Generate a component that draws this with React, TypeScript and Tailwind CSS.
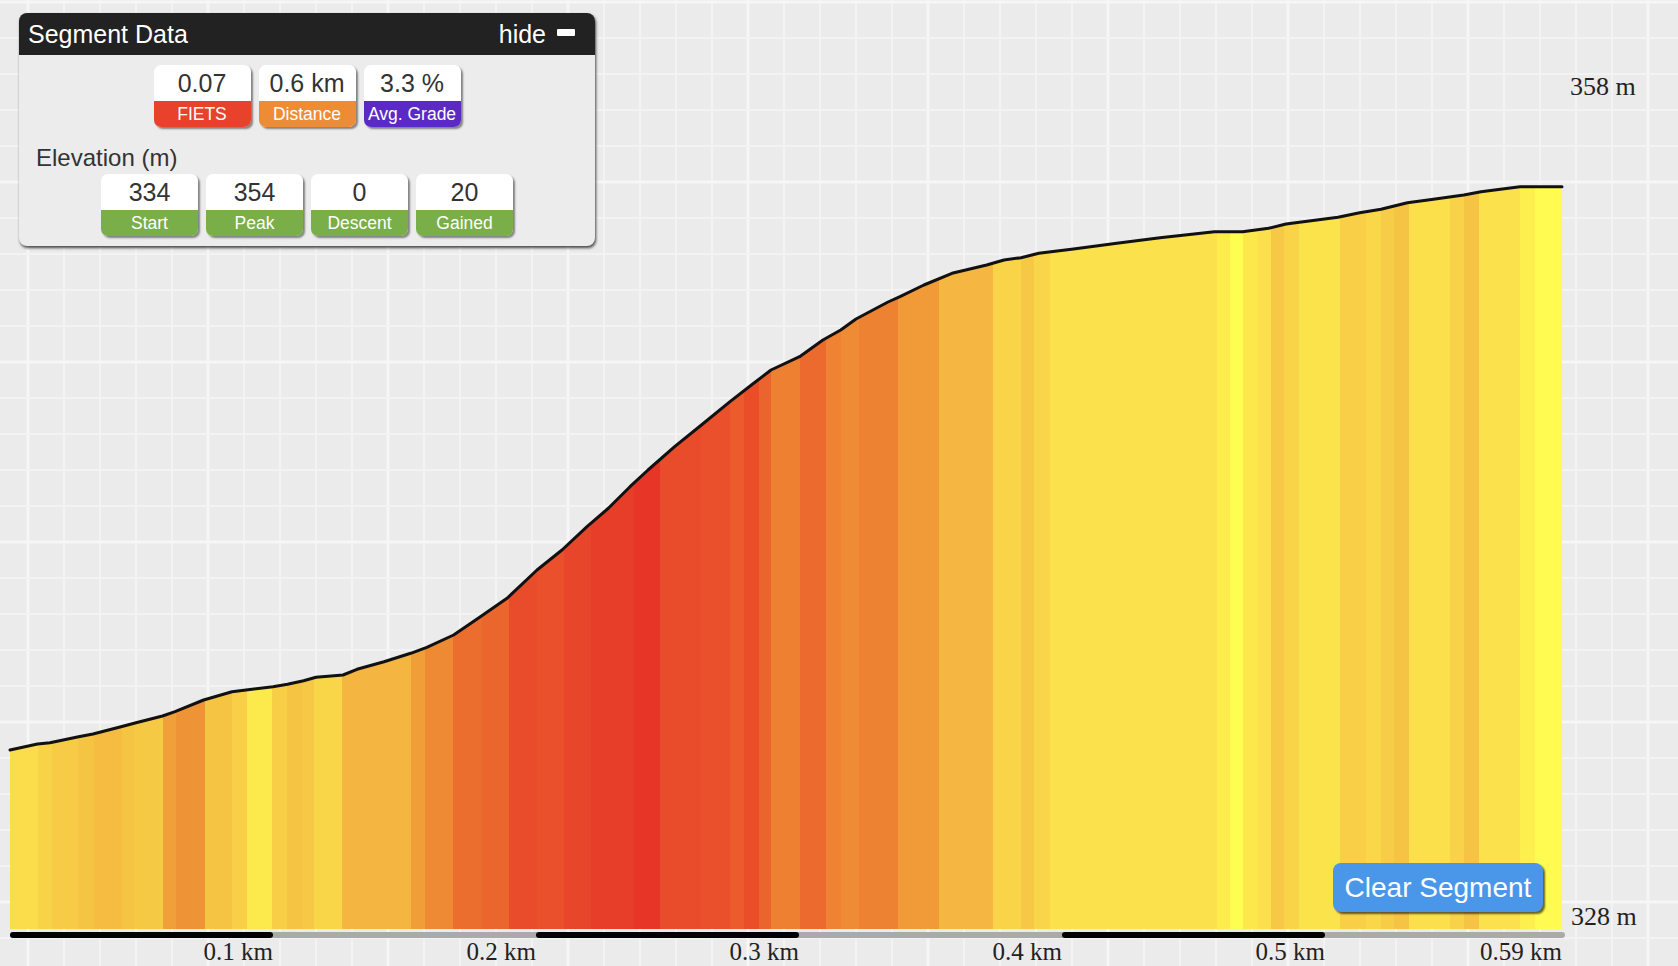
import React from "react";

type Stat = { value: string; label: string; color: string };

const W = 1678;
const H = 966;
const LEFT = 10;
const RIGHT = 1562;
const BASE = 929;

// elevation profile traced in screen px
const profile: [number, number][] = [
  [10, 750], [37.5, 744], [50, 742.7], [78.6, 736.7], [93, 734], [121, 726.7], [136, 722.7],
  [162.5, 716], [175, 711.7], [203.6, 700], [232, 691.7], [246, 690], [273, 686.7], [287.5, 684.3],
  [303.6, 680.7], [316, 677.3], [343, 675], [357, 669.3], [384, 661.7], [410.7, 653.3], [426.8, 647.3],
  [453.6, 635], [480, 617], [507, 598.3], [537, 570], [562, 550], [587, 526.7], [608.6, 508],
  [630, 486.7], [648, 470], [674.6, 446.7], [701.4, 425], [730, 401.7], [751.4, 385], [771, 370],
  [799.6, 356.7], [822.9, 340], [840.7, 330], [856, 319], [888, 302], [900, 296.7], [923.9, 285],
  [952, 273.3], [986.7, 265], [1004, 260], [1021, 257.7], [1038.8, 253.3], [1073.5, 249],
  [1116.8, 243.3], [1160, 237.7], [1214.4, 231.7], [1242.6, 231.7], [1268.6, 228.3], [1286, 224],
  [1338, 217.3], [1359.7, 212.7], [1381, 209.3], [1407.4, 202.7], [1433.4, 199.3], [1463.8, 195],
  [1481, 191.7], [1520, 186.7], [1562, 186.7],
];

// grade colour bands: start x, colour
const bands: [number, string][] = [
  [10, "#fbdc4a"], [38, "#f8d247"], [52, "#f7cb45"], [78, "#f6c443"], [94, "#f5bc41"], [122, "#f6c443"],
  [134, "#f6c944"], [163, "#f19f38"], [176, "#ef9436"], [205, "#f6c443"], [232, "#f8cf46"], [247, "#fce94c"],
  [272, "#f8ce46"], [287, "#f6c443"], [302, "#f7c845"], [314, "#f9d648"], [342, "#f4b640"], [411, "#f09e38"],
  [425, "#ed8a33"], [453, "#eb6e2e"], [482, "#ea662d"], [509, "#e84c2a"], [537, "#e9502b"], [564, "#e8462a"],
  [591, "#e73e29"], [634, "#e73628"], [660, "#e94c2a"], [701, "#ea502b"], [730, "#eb5b2c"], [744, "#ea4e29"],
  [759, "#ec642d"], [771, "#ee8032"], [800, "#ec6a2e"], [826, "#ef8233"], [841, "#ef8b35"], [859, "#ee8233"],
  [898, "#f09b38"], [939, "#f5b741"], [993, "#f9d449"], [1021, "#f7c746"], [1034, "#f9d649"], [1050, "#fbe14b"],
  [1217, "#fdec4c"], [1230, "#fffe50"], [1243, "#fde84c"], [1258, "#fbe04b"], [1271, "#f7c746"], [1284, "#f9d448"],
  [1299, "#fbe34b"], [1340, "#f8cf47"], [1366, "#f9d749"], [1381, "#f7cc46"], [1394, "#f6c444"], [1409, "#fbe04b"],
  [1450, "#f8d248"], [1464, "#f6c444"], [1479, "#fbe14b"], [1520, "#fdef4d"], [1535, "#fffb50"],
];

const ticks = [
  { x: 273, label: "0.1 km" },
  { x: 536, label: "0.2 km" },
  { x: 799, label: "0.3 km" },
  { x: 1062, label: "0.4 km" },
  { x: 1325, label: "0.5 km" },
  { x: 1562, label: "0.59 km" },
];

const summary: Stat[] = [
  { value: "0.07", label: "FIETS", color: "bg-[#e8412c]" },
  { value: "0.6 km", label: "Distance", color: "bg-[#ee8c36]" },
  { value: "3.3 %", label: "Avg. Grade", color: "bg-[#5b2ac4]" },
];

const elevation: Stat[] = [
  { value: "334", label: "Start", color: "bg-[#7aae48]" },
  { value: "354", label: "Peak", color: "bg-[#7aae48]" },
  { value: "0", label: "Descent", color: "bg-[#7aae48]" },
  { value: "20", label: "Gained", color: "bg-[#7aae48]" },
];

function StatBox({ value, label, color }: Stat) {
  return (
    <div className="w-[97px] rounded-[7px] overflow-hidden shadow-[2px_2px_2px_rgba(0,0,0,0.45)]">
      <div className="h-[36px] leading-[36px] bg-white text-center text-[25px] text-[#333]">{value}</div>
      <div className={`h-[26px] leading-[26px] text-center text-[17.5px] text-white ${color}`}>{label}</div>
    </div>
  );
}

function ElevationChart() {
  const line = profile.map(([x, y]) => `${x},${y}`).join(" ");
  const area = `${line} ${RIGHT},${BASE} ${LEFT},${BASE}`;
  const vLines = Array.from({ length: 47 }, (_, i) => i);
  const hLines = Array.from({ length: 27 }, (_, i) => i);
  const serif = "'Liberation Serif', 'Times New Roman', serif";

  return (
    <svg width={W} height={H} viewBox={`0 0 ${W} ${H}`} className="block">
      <defs>
        <clipPath id="area">
          <polygon points={area} />
        </clipPath>
      </defs>
      <rect width={W} height={H} fill="#ebebeb" />
      {vLines.map((i) => (
        <line
          key={`v${i}`}
          x1={28 + i * 36}
          x2={28 + i * 36}
          y1={0}
          y2={H}
          stroke={i % 5 === 0 ? "#f6f6f6" : "#f3f3f3"}
          strokeWidth={i % 5 === 0 ? 3 : 2}
        />
      ))}
      {hLines.map((i) => (
        <line
          key={`h${i}`}
          x1={0}
          x2={W}
          y1={2 + i * 36}
          y2={2 + i * 36}
          stroke={i % 5 === 0 ? "#f6f6f6" : "#f3f3f3"}
          strokeWidth={i % 5 === 0 ? 3 : 2}
        />
      ))}

      <g clipPath="url(#area)">
        {bands.map(([x, c], i) => {
          const next = i + 1 < bands.length ? bands[i + 1][0] : RIGHT;
          return <rect key={x} x={x} y={150} width={next - x + 0.6} height={BASE - 150} fill={c} />;
        })}
      </g>
      <polyline points={line} fill="none" stroke="#111" strokeWidth={3} strokeLinejoin="round" strokeLinecap="round" />

      {/* distance scale bar */}
      <line x1={LEFT + 3} x2={RIGHT} y1={935} y2={935} stroke="#aaaaaa" strokeWidth={6} strokeLinecap="round" />
      {[0, 2, 4].map((i) => (
        <line
          key={i}
          x1={i === 0 ? LEFT + 3 : ticks[i - 1].x + 3}
          x2={ticks[i].x - 3}
          y1={935}
          y2={935}
          stroke="#000"
          strokeWidth={6}
          strokeLinecap="round"
        />
      ))}

      {ticks.map((t) => (
        <text key={t.label} x={t.x} y={960} textAnchor="end" fontFamily={serif} fontSize={25} fill="#222">
          {t.label}
        </text>
      ))}
      <text x={1570} y={95} fontFamily={serif} fontSize={26} fill="#222">
        358 m
      </text>
      <text x={1571} y={925} fontFamily={serif} fontSize={26} fill="#222">
        328 m
      </text>
    </svg>
  );
}

export default function App() {
  return (
    <div className="relative w-[1678px] h-[966px] overflow-hidden font-['Liberation_Sans',Arial,sans-serif]">
      <ElevationChart />

      {/* Segment summary panel */}
      <div className="absolute left-[19px] top-[13px] w-[576px] h-[233px] rounded-[8px] overflow-hidden bg-[#ececec] shadow-[1px_2px_3px_rgba(0,0,0,0.7)]">
        <div className="flex items-center justify-between h-[42px] pl-[9px] pr-[20px] bg-[#222] text-white text-[25px] leading-[42px]">
          <span>Segment Data</span>
          <span className="flex items-center gap-[11px]">
            hide
            <span className="w-[18px] h-[7px] mb-[3px] rounded-[1px] bg-white" />
          </span>
        </div>
        <div className="pt-[10px]">
          <div className="flex justify-center gap-[8px]">
            {summary.map((s) => (
              <StatBox key={s.label} {...s} />
            ))}
          </div>
          <div className="mt-[16px] h-[29px] leading-[29px] pl-[17px] text-[24px] text-[#333]">Elevation (m)</div>
          <div className="mt-[2px] flex justify-center gap-[8px]">
            {elevation.map((s) => (
              <StatBox key={s.label} {...s} />
            ))}
          </div>
        </div>
      </div>

      <button className="absolute left-[1333px] top-[863px] w-[210px] h-[49px] rounded-[8px] bg-[#4a97e9] text-white text-[28px] leading-[49px] text-center shadow-[2px_2px_2px_rgba(0,0,0,0.6)]">
        Clear Segment
      </button>
    </div>
  );
}
